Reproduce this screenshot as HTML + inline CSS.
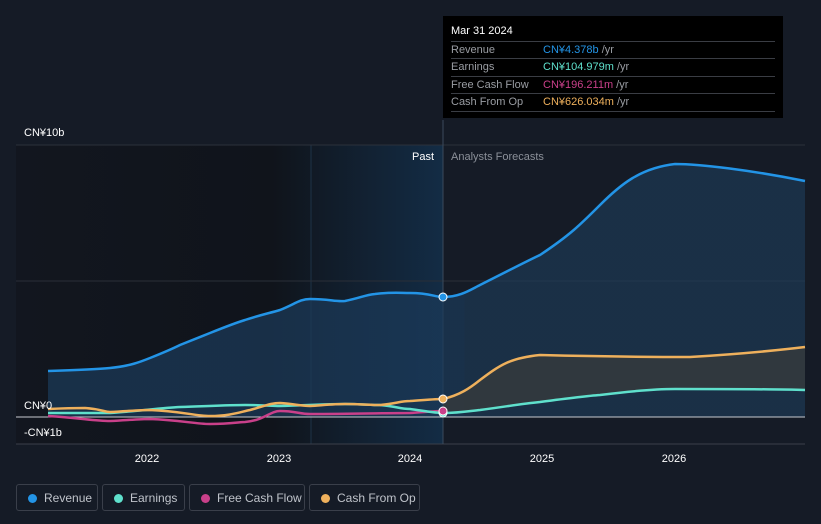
<!DOCTYPE html>
<html><head><meta charset="utf-8"><style>
body{margin:0;width:821px;height:524px;background:#151b26;font-family:"Liberation Sans",sans-serif;overflow:hidden;position:relative}
.tt{position:absolute;left:443px;top:16px;width:340px;height:102px;background:#000;color:#fff;font-size:11px}
.tt .h{position:absolute;left:8px;top:9px;font-size:11px}
.row{position:absolute;left:8px;width:324px;height:17px;border-top:1px solid #3a3d44;line-height:17px;color:#9a9da3}
.row span{position:absolute;left:92px}
.lg{position:absolute;top:484px;height:27px;border:1px solid #3a3f4a;border-radius:3px;color:#bfc3ca;font-size:12px;line-height:27px;box-sizing:border-box}
.lg i{position:absolute;left:11px;top:9px;width:9px;height:9px;border-radius:50%}
.lg b{font-weight:normal;position:absolute;left:27px}
</style></head><body>
<svg width="821" height="524" style="position:absolute;left:0;top:0">
<defs>
<linearGradient id="bg" x1="0" x2="1" y1="0" y2="0"><stop offset="0" stop-color="#12161f"/><stop offset="0.6" stop-color="#10141b"/><stop offset="1" stop-color="#132c45"/></linearGradient>
<linearGradient id="rf" x1="0" x2="1" y1="0" y2="0"><stop offset="0" stop-color="#1a3652" stop-opacity="0.8"/><stop offset="0.55" stop-color="#1b3a5a" stop-opacity="0.7"/><stop offset="0.55" stop-color="#1d3d5c" stop-opacity="0.6"/><stop offset="1" stop-color="#1d3d5c" stop-opacity="0.6"/></linearGradient>
</defs>
<rect x="16" y="145" width="427" height="299" fill="url(#bg)"/>
<line x1="311" y1="145" x2="311" y2="444" stroke="#1d3246"/>
<line x1="16" y1="145" x2="805" y2="145" stroke="#2c313b"/>
<line x1="16" y1="281" x2="805" y2="281" stroke="#2a2f38"/>
<line x1="16" y1="444" x2="805" y2="444" stroke="#3a3f49"/>
<line x1="443" y1="120" x2="443" y2="444" stroke="#3a4a5c"/>
<path d="M48,371 C80,370 100,369 110,368 C130,366 140,362 150,358 C165,352 170,350 180,345 C195,339 200,337 210,333 C225,327 235,323 245,320 C260,315 270,313 280,310 C295,304 300,299 310,299 C330,299 335,302 345,301 C360,298 365,295 375,294 C390,292 400,293 410,293 C430,293 435,297 443,297 C460,297 470,290 480,285 C510,270 525,262 540,255 C570,235 580,225 600,205 C620,185 640,168 675,164 C700,164 750,170 805,181 L805,417 L48,417 Z" fill="url(#rf)"/>
<path d="M443,399 C460,395 470,388 480,380 C500,365 510,358 540,355 C580,356 620,357 690,357 C740,354 780,350 805,347 L805,390 C760,389 700,389 675,389 C630,391 600,395 540,402 C500,408 480,413 443,413 Z" fill="#3a3c3a" fill-opacity="0.7"/>
<line x1="16" y1="417" x2="805" y2="417" stroke="#c8cbd0" stroke-width="1"/>
<path d="M48,416 C80,418 95,421 110,421 C130,420 140,419 150,419 C180,420 195,424 210,424 C230,424 240,422 245,422 C265,420 270,411 280,411 C295,411 300,414 310,414 C350,414 390,413 410,413 C425,412 435,411 443,411" fill="none" stroke="#c9408a" stroke-width="2.5"/>
<path d="M48,413 C80,413 95,413 110,413 C140,411 160,408 180,407 C210,406 230,405 245,405 C265,405 270,406 280,406 C310,405 330,404 345,404 C360,404 370,405 380,405 C395,406 400,409 410,409 C425,411 435,413 443,413 C460,413 470,411 480,410 C510,406 520,404 540,402 C570,398 585,396 600,395 C640,390 660,389 675,389 C720,389 770,389 805,390" fill="none" stroke="#5fe0cc" stroke-width="2.5"/>
<path d="M48,409 C70,408 80,408 85,408 C100,409 105,412 110,412 C130,411 140,410 150,410 C180,411 195,416 210,416 C230,416 240,412 250,410 C265,406 270,403 280,403 C295,404 300,406 310,406 C325,405 335,404 345,404 C360,404 370,405 380,405 C395,404 400,401 410,401 C425,400 435,399 443,399 C460,395 470,388 480,380 C500,365 510,358 540,355 C580,356 620,357 690,357 C740,354 780,350 805,347" fill="none" stroke="#eeb05c" stroke-width="2.5"/>
<path d="M48,371 C80,370 100,369 110,368 C130,366 140,362 150,358 C165,352 170,350 180,345 C195,339 200,337 210,333 C225,327 235,323 245,320 C260,315 270,313 280,310 C295,304 300,299 310,299 C330,299 335,302 345,301 C360,298 365,295 375,294 C390,292 400,293 410,293 C430,293 435,297 443,297 C460,297 470,290 480,285 C510,270 525,262 540,255 C570,235 580,225 600,205 C620,185 640,168 675,164 C700,164 750,170 805,181" fill="none" stroke="#2394e6" stroke-width="2.5"/>
<circle cx="443" cy="297" r="4" fill="#2394e6" stroke="#fff" stroke-width="1"/>
<circle cx="443" cy="413" r="4" fill="#5fe0cc" stroke="#fff" stroke-width="1"/>
<circle cx="443" cy="411" r="4" fill="#c9408a" stroke="#fff" stroke-width="1"/>
<circle cx="443" cy="399" r="4" fill="#eeb05c" stroke="#fff" stroke-width="1"/>
<g font-family="Liberation Sans,sans-serif" font-size="11">
<text x="24" y="136" fill="#fff">CN¥10b</text>
<text x="24" y="409" fill="#fff">CN¥0</text>
<text x="24" y="436" fill="#fff">-CN¥1b</text>
<text x="434" y="160" fill="#fff" text-anchor="end">Past</text>
<text x="451" y="160" fill="#8b9099">Analysts Forecasts</text>
<g fill="#fff" text-anchor="middle"><text x="147" y="462">2022</text><text x="279" y="462">2023</text><text x="410" y="462">2024</text><text x="542" y="462">2025</text><text x="674" y="462">2026</text></g>
</g>
</svg>
<div class="tt"><div class="h">Mar 31 2024</div>
<div class="row" style="top:25px">Revenue<span style="color:#2394e6">CN¥4.378b <em style="font-style:normal;color:#9a9da3">/yr</em></span></div>
<div class="row" style="top:42px">Earnings<span style="color:#5fe0cc">CN¥104.979m <em style="font-style:normal;color:#9a9da3">/yr</em></span></div>
<div class="row" style="top:60px">Free Cash Flow<span style="color:#c9408a">CN¥196.211m <em style="font-style:normal;color:#9a9da3">/yr</em></span></div>
<div class="row" style="top:77px;border-bottom:1px solid #3a3d44">Cash From Op<span style="color:#eeb05c">CN¥626.034m <em style="font-style:normal;color:#9a9da3">/yr</em></span></div>
</div>
<div class="lg" style="left:16px;width:82px"><i style="background:#2394e6"></i><b>Revenue</b></div>
<div class="lg" style="left:102px;width:83px"><i style="background:#5fe0cc"></i><b>Earnings</b></div>
<div class="lg" style="left:189px;width:116px"><i style="background:#c9408a"></i><b>Free Cash Flow</b></div>
<div class="lg" style="left:309px;width:111px"><i style="background:#eeb05c"></i><b>Cash From Op</b></div>
</body></html>
